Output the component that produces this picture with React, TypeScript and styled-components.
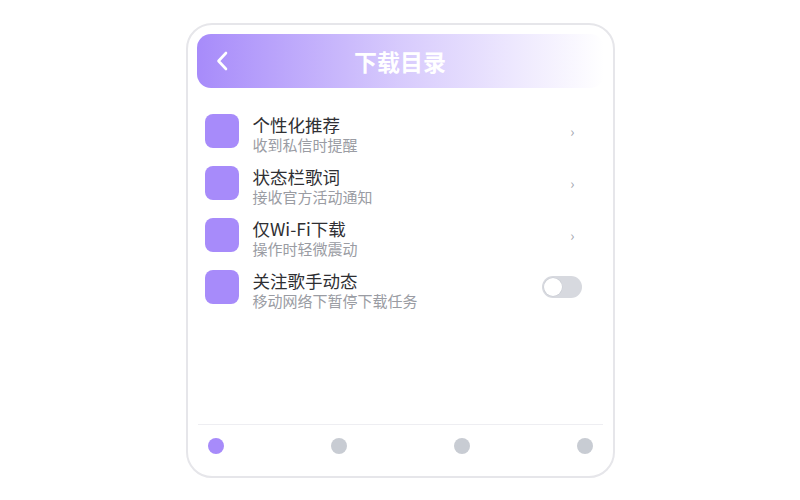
import React, { useState } from "react";
import styled, { createGlobalStyle } from "styled-components";

const Global = createGlobalStyle`
  html, body { margin: 0; padding: 0; background: #ffffff; }
  body { font-family: "Noto Sans CJK SC", "Noto Sans", sans-serif; }
  * { box-sizing: border-box; }
`;

const Page = styled.div`
  width: 800px;
  height: 500px;
  display: flex;
  justify-content: center;
  padding-top: 23px;
`;

const Phone = styled.div`
  width: 429px;
  height: 455px;
  border: 2px solid #e6e6ea;
  border-radius: 26px;
  padding: 9px 9px 10px 9px;
  display: flex;
  flex-direction: column;
  background: #fff;
`;

const Header = styled.div`
  height: 54px;
  border-radius: 14px;
  background: linear-gradient(90deg, #a78bfa 0%, rgba(167, 139, 250, 0.45) 50%, rgba(167, 139, 250, 0) 100%);
  display: flex;
  align-items: center;
  position: relative;
  padding-left: 17px;
`;

const Back = styled.button`
  border: none;
  background: none;
  padding: 0;
  width: 16px;
  height: 24px;
  display: flex;
  align-items: center;
  justify-content: center;
  cursor: pointer;
`;

const Title = styled.h1`
  position: absolute;
  left: 0;
  right: 0;
  margin: 0;
  text-align: center;
  color: #fff;
  font-size: 23px;
  font-weight: 700;
  pointer-events: none;
`;

const List = styled.div`
  flex: 1;
  display: flex;
  flex-direction: column;
  gap: 18px;
  padding: 26px 22px 0 8px;
`;

const Row = styled.div`
  display: flex;
  align-items: center;
  height: 34px;
`;

const Icon = styled.div`
  width: 34px;
  height: 34px;
  border-radius: 8px;
  background: #a78bfa;
  flex-shrink: 0;
`;

const Texts = styled.div`
  flex: 1;
  align-self: flex-start;
  margin-left: 14px;
  display: flex;
  flex-direction: column;
`;

const RowTitle = styled.div`
  font-size: 17.5px;
  line-height: 22px;
  color: #2f2f33;
`;

const RowSub = styled.div`
  font-size: 15px;
  line-height: 18px;
  color: #9a9ca3;
`;

const Chevron = styled.span`
  font-size: 14px;
  color: #a0a4ad;
  margin-right: 7px;
  line-height: 1;
`;

const Toggle = styled.button<{ $on: boolean }>`
  width: 40px;
  height: 22px;
  border-radius: 11px;
  border: none;
  padding: 2px;
  background: ${(p) => (p.$on ? "#a78bfa" : "#d7d9df")};
  display: flex;
  justify-content: ${(p) => (p.$on ? "flex-end" : "flex-start")};
  align-items: center;
  cursor: pointer;
`;

const Knob = styled.span`
  width: 18px;
  height: 18px;
  border-radius: 50%;
  background: #fff;
  box-shadow: 0 0 0 0.5px #c9ccd3;
`;

const TabBar = styled.div`
  border-top: 1px solid #eeeef2;
  margin: 0 1px;
  padding: 13px 10px 12px;
  display: flex;
  justify-content: space-between;
`;

const Dot = styled.span<{ $active: boolean }>`
  width: 16px;
  height: 16px;
  border-radius: 50%;
  background: ${(p) => (p.$active ? "#a78bfa" : "#c8ccd3")};
`;

const items = [
  { title: "个性化推荐", sub: "收到私信时提醒", kind: "chevron" },
  { title: "状态栏歌词", sub: "接收官方活动通知", kind: "chevron" },
  { title: "仅Wi-Fi下载", sub: "操作时轻微震动", kind: "chevron" },
  { title: "关注歌手动态", sub: "移动网络下暂停下载任务", kind: "toggle" },
];

export default function App() {
  const [on, setOn] = useState(false);
  return (
    <Page>
      <Global />
      <Phone>
        <Header>
          <Back aria-label="back">
            <svg width="12" height="20" viewBox="0 0 12 20" fill="none">
              <path d="M10 2 L2.5 10 L10 18" stroke="#fff" strokeWidth="2.6" strokeLinecap="round" strokeLinejoin="round" />
            </svg>
          </Back>
          <Title>下载目录</Title>
        </Header>
        <List>
          {items.map((it) => (
            <Row key={it.title}>
              <Icon />
              <Texts>
                <RowTitle>{it.title}</RowTitle>
                <RowSub>{it.sub}</RowSub>
              </Texts>
              {it.kind === "chevron" ? (
                <Chevron>›</Chevron>
              ) : (
                <Toggle $on={on} onClick={() => setOn(!on)}>
                  <Knob />
                </Toggle>
              )}
            </Row>
          ))}
        </List>
        <TabBar>
          {[0, 1, 2, 3].map((i) => (
            <Dot key={i} $active={i === 0} />
          ))}
        </TabBar>
      </Phone>
    </Page>
  );
}
